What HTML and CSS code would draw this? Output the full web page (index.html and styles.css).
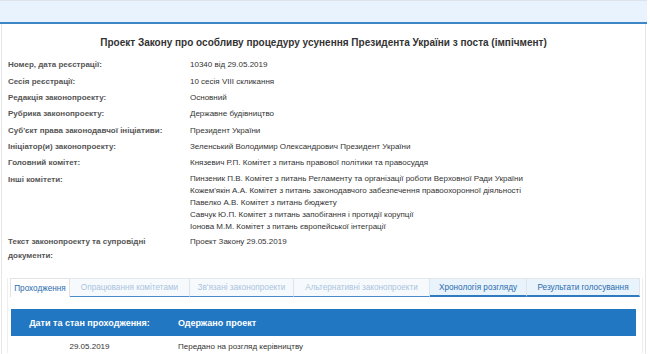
FILE: index.html
```html
<!DOCTYPE html>
<html lang="uk">

<head>
  <meta charset="UTF-8" />
  <meta name="viewport" content="width=device-width, initial-scale=1.0">
  <title>Картка законопроекту</title>
  <link rel="stylesheet" href="styles.css">
</head>

<body>
  <div class="topbar"></div>
  <div class="page">
    <h2 class="bill-title">Проект Закону про особливу процедуру усунення Президента України з поста (імпічмент)</h2>

    <div class="info">
      <div class="row">
        <div class="label">Номер, дата реєстрації:</div>
        <div class="value">10340 від 29.05.2019</div>
      </div>
      <div class="row">
        <div class="label">Сесія реєстрації:</div>
        <div class="value">10 сесія VIII скликання</div>
      </div>
      <div class="row">
        <div class="label">Редакція законопроекту:</div>
        <div class="value">Основний</div>
      </div>
      <div class="row">
        <div class="label">Рубрика законопроекту:</div>
        <div class="value">Державне будівництво</div>
      </div>
      <div class="row">
        <div class="label">Суб'єкт права законодавчої ініціативи:</div>
        <div class="value">Президент України</div>
      </div>
      <div class="row">
        <div class="label">Ініціатор(и) законопроекту:</div>
        <div class="value">Зеленський Володимир Олександрович Президент України</div>
      </div>
      <div class="row">
        <div class="label">Головний комітет:</div>
        <div class="value">Князевич Р.П. Комітет з питань правової політики та правосуддя</div>
      </div>
      <div class="row">
        <div class="label">Інші комітети:</div>
        <div class="value list">
          <div>Пинзеник П.В. Комітет з питань Регламенту та організації роботи Верховної Ради України</div>
          <div>Кожем'якін А.А. Комітет з питань законодавчого забезпечення правоохоронної діяльності</div>
          <div>Павелко А.В. Комітет з питань бюджету</div>
          <div>Савчук Ю.П. Комітет з питань запобігання і протидії корупції</div>
          <div>Іонова М.М. Комітет з питань європейської інтеграції</div>
        </div>
      </div>
      <div class="row">
        <div class="label">Текст законопроекту та супровідні документи:</div>
        <div class="value">Проект Закону 29.05.2019</div>
      </div>
    </div>

    <div class="tabs-box">
      <div class="tabs">
        <div class="tab active">Проходження</div>
        <div class="tab disabled">Опрацювання комітетами</div>
        <div class="tab disabled">Зв'язані законопроекти</div>
        <div class="tab disabled">Альтернативні законопроекти</div>
        <div class="tab">Хронологія розгляду</div>
        <div class="tab">Результати голосування</div>
      </div>

      <table class="flow">
        <thead>
          <tr>
            <th class="col-date">Дати та стан проходження:</th>
            <th>Одержано проект</th>
          </tr>
        </thead>
        <tbody>
          <tr>
            <td class="col-date">29.05.2019</td>
            <td>Передано на розгляд керівництву</td>
          </tr>
        </tbody>
      </table>
    </div>
  </div>
</body>

</html>
```

FILE: styles.css
```css
/* Reset */
* {
  box-sizing: border-box;
  margin: 0;
  padding: 0;
}

body {
  font-family: 'Liberation Sans', Arial, sans-serif;
  font-size: 8px;
  color: #333;
  background: #fff;
}

/* Top strip */
.topbar {
  height: 24px;
  margin-right: 3px;
  background: #e8f3fd;
  border-top: 1px solid #dde3e8;
  border-bottom: 2px solid #3d86c8;
}

.page {
  margin: 0 4px 0 1px;
  border-left: 1px solid #e6e6e6;
  border-right: 1px solid #e6e6e6;
  padding: 13px 0 0;
  min-height: 330px;
}

.bill-title {
  font-size: 10px;
  font-weight: 700;
  text-align: center;
  line-height: 12px;
  color: #333;
  margin-bottom: 8px;
}

/* Info rows */
.info {
  padding-left: 6px;
}

.row {
  display: grid;
  grid-template-columns: 182px 1fr;
  padding: 1.2px 0;
  line-height: 14px;
}

.label {
  font-weight: 700;
  color: #555;
  padding-right: 8px;
}

.value.list {
  line-height: 12px;
}

/* Tabs */
.tabs-box {
  margin: 14px 2px 0 5px;
  border-left: 1px solid #eee;
  border-right: 1px solid #eee;
  padding: 0 2px;
}

.tabs {
  display: grid;
  grid-template-columns: 60px 120px 104px 136px 97px 113px;
  height: 19px;
}

.tab {
  display: flex;
  align-items: center;
  justify-content: center;
  font-size: 8.2px;
  color: #2a6cad;
  background: #e8f3fc;
  border-top: 1px solid #e3e8ec;
  border-right: 1px solid #dde6ee;
  border-bottom: 2px solid #2f7bc0;
}

.tab.disabled {
  color: #a9c4dd;
  background: #f7fafd;
  border-bottom: 1px solid #4a8ccb;
}

.tab.active {
  background: #fff;
  border: 1px solid #e3e3e3;
  border-bottom: none;
}

/* Flow table */
.flow {
  width: 625px;
  margin: 12px 0 0 1px;
  border-collapse: collapse;
}

.flow th {
  background: #2277c2;
  color: #fff;
  font-size: 9px;
  font-weight: 700;
  text-align: left;
  height: 27px;
  padding-left: 10px;
}

.flow td {
  text-align: left;
  padding: 5px 0 0 10px;
  line-height: 12px;
}

.flow .col-date {
  width: 157px;
  text-align: center;
  padding-left: 0;
}
```
